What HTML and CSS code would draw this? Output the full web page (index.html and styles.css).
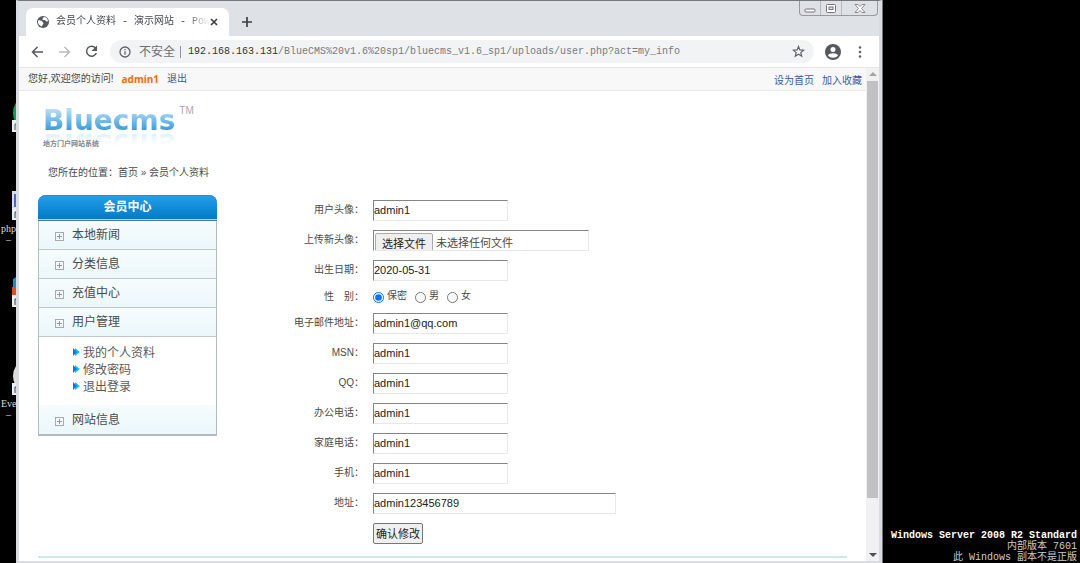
FILE: index.html
```html
<!DOCTYPE html>
<html lang="zh-CN">
<head>
<meta charset="utf-8">
<title>会员个人资料 - 演示网站</title>
<link rel="stylesheet" href="styles.css">
</head>
<body>
<div class="desktop">
  <aside class="shortcuts">
    <div class="shortcut shortcut-a"><svg width="6" height="32" viewBox="0 0 6 32"><ellipse cx="9" cy="12" rx="8" ry="13" fill="#12a04c"/><rect x="0" y="19" width="6" height="12" fill="#e8eef2"/><path d="M3 29v-6h3" stroke="#456" fill="none"/></svg></div>
    <div class="shortcut shortcut-b"><svg width="6" height="32" viewBox="0 0 6 32"><path d="M0 2h6v18H0z" fill="#d6dcec"/><path d="M2 5h4v13H2z" fill="#4b6cb7"/><rect x="0" y="19" width="6" height="12" fill="#e8eef2"/><path d="M3 29v-6h3" stroke="#245" fill="none"/></svg><span>php</span><span>–</span></div>
    <div class="shortcut shortcut-c"><svg width="6" height="32" viewBox="0 0 6 32"><path d="M1 3l5-3v14H1z" fill="#1690c8"/><path d="M0 11h6v8H0z" fill="#e2502a"/><rect x="0" y="19" width="6" height="12" fill="#e8eef2"/><path d="M3 29v-6h3" stroke="#245" fill="none"/></svg></div>
    <div class="shortcut shortcut-d"><svg width="6" height="32" viewBox="0 0 6 32"><ellipse cx="10" cy="12" rx="9" ry="13" fill="#ddd"/><rect x="0" y="19" width="6" height="12" fill="#e8eef2"/><path d="M3 29v-6h3" stroke="#245" fill="none"/></svg><span>Eve</span><span>–</span></div>
  </aside>

  <section class="window">
    <header class="tabstrip">
      <div class="tab">
        <svg class="globe" width="12" height="12" viewBox="0 0 24 24"><circle cx="12" cy="12" r="12" fill="#555a5f"/><path d="M3 8c3 0 4 2 7 2 1 3 3 3 3 5s-3 2-3 6C5 20 2 16 2 12zM13 2c5 0 8 3 9 8-2 2-4 1-5-1s-5 0-6-2 2-2 2-5z" fill="#fff"/></svg>
        <span class="tab-title">会员个人资料 - 演示网站 - Pow</span>
        <button class="icon-button" aria-label="关闭标签"><svg width="8" height="8" viewBox="0 0 8 8"><path d="M1 1l6 6M7 1L1 7" stroke="#3c4043" stroke-width="1.7"/></svg></button>
      </div>
      <button class="icon-button new-tab" aria-label="新标签页"><svg width="12" height="12" viewBox="0 0 12 12"><path d="M6 1v10M1 6h10" stroke="#3c4043" stroke-width="1.7"/></svg></button>
      <div class="window-controls">
        <button aria-label="最小化"><svg width="12" height="9" viewBox="0 0 12 9"><rect x="1" y="5" width="10" height="3" rx="1" fill="#fff" stroke="#70757b"/></svg></button>
        <button aria-label="最大化"><svg width="12" height="9" viewBox="0 0 12 9"><rect x="1.500" y=".5" width="9" height="8" rx="1" fill="#fff" stroke="#70757b"/><rect x="4" y="3" width="4" height="2.500" fill="#dde0e4" stroke="#70757b"/></svg></button>
        <button class="wide" aria-label="关闭"><svg width="12" height="9" viewBox="0 0 12 9"><path d="M1 .5h3l2 2 2-2h3L7.500 4.500l3.500 4H8l-2-2-2 2H1l3.500-4z" fill="#fff" stroke="#85898e"/></svg></button>
      </div>
    </header>

    <nav class="toolbar">
      <button class="icon-button" aria-label="后退"><svg width="13" height="12" viewBox="0 0 13 12"><path d="M12 6H2M6.500 1L1.500 6l5 5" fill="none" stroke="#55595e" stroke-width="1.500"/></svg></button>
      <button class="icon-button" aria-label="前进"><svg width="13" height="12" viewBox="0 0 13 12"><path d="M1 6h10M6.500 1l5 5-5 5" fill="none" stroke="#b9bcbf" stroke-width="1.500"/></svg></button>
      <button class="icon-button" aria-label="刷新"><svg width="13" height="13" viewBox="0 0 13 13"><path d="M10.700 3.300A5 5 0 1 0 11.300 8" fill="none" stroke="#55595e" stroke-width="1.500"/><path d="M12 .5v5.500H6.500z" fill="#55595e"/></svg></button>
      <div class="address">
        <svg width="12" height="12" viewBox="0 0 12 12"><circle cx="6" cy="6" r="5" fill="none" stroke="#5f6368" stroke-width="1.300"/><path d="M6 5.300v3.400M6 3v1.300" stroke="#5f6368" stroke-width="1.300"/></svg>
        <span class="insecure">不安全</span>
        <span class="url"><b>192.168.163.131</b>/BlueCMS%20v1.6%20sp1/bluecms_v1.6_sp1/uploads/user.php?act=my_info</span>
        <button class="icon-button" aria-label="收藏"><svg width="13" height="13" viewBox="0 0 13 13"><path d="M6.500 1.500l1.400 3.400 3.700.3-2.800 2.400.9 3.600-3.200-1.900-3.200 1.900.9-3.600-2.800-2.400 3.700-.3z" fill="none" stroke="#5f6368" stroke-width="1.200"/></svg></button>
      </div>
      <div class="toolbar-end">
        <button class="icon-button" aria-label="用户"><svg width="16" height="16" viewBox="0 0 16 16"><circle cx="8" cy="8" r="8" fill="#55595f"/><circle cx="8" cy="5.500" r="2.500" fill="#fff"/><path d="M3 11.500c1-3 9-3 10 0-2 3-8 3-10 0z" fill="#fff"/></svg></button>
        <button class="icon-button" aria-label="菜单"><svg width="4" height="12" viewBox="0 0 4 12"><g fill="#5f6368"><circle cx="2" cy="1.500" r="1.300"/><circle cx="2" cy="6" r="1.300"/><circle cx="2" cy="10.500" r="1.300"/></g></svg></button>
      </div>
    </nav>

    <div class="viewport">
      <div class="page">
        <div class="topbar">
          <span>您好,欢迎您的访问!</span>
          <strong>admin1</strong>
          <a href="#">退出</a>
          <div class="quick-links"><a href="#">设为首页</a><a href="#">加入收藏</a></div>
        </div>
        <div class="brand">
          <div><div class="wordmark">Bluecms</div><div class="tagline">地方门户网站系统</div></div>
          <span class="tm">TM</span>
        </div>
        <div class="crumbs">您所在的位置：首页 » 会员个人资料</div>

        <div class="columns">
          <nav class="sidebar">
            <h2>会员中心</h2>
            <a class="item" href="#"><i class="plus"></i>本地新闻</a>
            <a class="item" href="#"><i class="plus"></i>分类信息</a>
            <a class="item" href="#"><i class="plus"></i>充值中心</a>
            <a class="item" href="#"><i class="plus"></i>用户管理</a>
            <ul>
              <li><a href="#"><svg width="7" height="8" viewBox="0 0 7 8"><path d="M2 0l5 4-5 4z" fill="#18c0fa"/><path d="M0 0l4 4-4 4z" fill="#0877e8"/></svg>我的个人资料</a></li>
              <li><a href="#"><svg width="7" height="8" viewBox="0 0 7 8"><path d="M2 0l5 4-5 4z" fill="#18c0fa"/><path d="M0 0l4 4-4 4z" fill="#0877e8"/></svg>修改密码</a></li>
              <li><a href="#"><svg width="7" height="8" viewBox="0 0 7 8"><path d="M2 0l5 4-5 4z" fill="#18c0fa"/><path d="M0 0l4 4-4 4z" fill="#0877e8"/></svg>退出登录</a></li>
            </ul>
            <a class="item" href="#"><i class="plus"></i>网站信息</a>
          </nav>

          <form class="profile">
            <div class="row"><label for="avatar">用户头像：</label><input class="field" id="avatar" value="admin1"></div>
            <div class="row"><label for="upload">上传新头像：</label>
              <div class="file"><span class="file-button">选择文件</span><span>未选择任何文件</span><input type="file" id="upload"></div></div>
            <div class="row"><label for="birth">出生日期：</label><input class="field" id="birth" value="2020-05-31"></div>
            <div class="row row-short"><span class="caption">性　别：</span>
              <div class="choices">
                <label><input type="radio" name="sex" checked><span>保密</span></label>
                <label><input type="radio" name="sex"><span>男</span></label>
                <label><input type="radio" name="sex"><span>女</span></label>
              </div></div>
            <div class="row"><label for="email">电子邮件地址：</label><input class="field" id="email" value="admin1@qq.com"></div>
            <div class="row"><label for="msn">MSN：</label><input class="field" id="msn" value="admin1"></div>
            <div class="row"><label for="qq">QQ：</label><input class="field" id="qq" value="admin1"></div>
            <div class="row"><label for="office">办公电话：</label><input class="field" id="office" value="admin1"></div>
            <div class="row"><label for="home">家庭电话：</label><input class="field" id="home" value="admin1"></div>
            <div class="row"><label for="mobile">手机：</label><input class="field" id="mobile" value="admin1"></div>
            <div class="row"><label for="address">地址：</label><input class="field field-long" id="address" value="admin123456789"></div>
            <div class="row"><span></span><button class="submit" type="button">确认修改</button></div>
          </form>
        </div>
        <hr>
      </div>
      <div class="scrollbar"><i class="arrow up"></i><i class="thumb"></i><i class="arrow down"></i></div>
    </div>
  </section>

  <div class="watermark"><b>Windows Server 2008 R2 Standard</b><span>内部版本 7601</span><span>此 Windows 副本不是正版</span></div>
</div>
</body>
</html>
```
FILE: styles.css
```css
* { box-sizing: border-box; }
body { margin: 0; background: #000; font: 10px/12px "Liberation Sans", "Noto Sans CJK SC", sans-serif; color: #4a4a4a; }
button { padding: 0; font: inherit; color: inherit; }
a { color: #3a5ba5; text-decoration: none; }
svg { display: block; flex: none; }

.desktop { display: grid; grid-template-columns: 16px minmax(0, 1fr) 198px; min-height: 100vh; overflow: hidden; }

.shortcuts { position: relative; overflow: hidden; color: #ddd; font-family: "Liberation Serif", serif; }
.shortcut { position: absolute; left: 1px; width: 15px; display: flex; flex-direction: column; font-size: 10px; }
.shortcut svg { margin-left: 11px; margin-bottom: 2px; }
.shortcut span { line-height: 11px; }
.shortcut span + span { padding-left: 5px; }
.shortcut-a { top: 101px; }
.shortcut-b { top: 189px; }
.shortcut-c { top: 276px; }
.shortcut-d { top: 364px; }

.window { display: flex; flex-direction: column; border: solid #d9dce2; border-width: 0 3px 2px; border-top: 1px solid #77787c; box-shadow: 1px 0 #777; background: #dee1e6; }
.icon-button { display: flex; align-items: center; justify-content: center; border: 0; background: none; }

.tabstrip { display: flex; height: 35px; padding-left: 7px; }
.tab { display: flex; align-items: center; width: 203px; margin-top: 7px; padding: 0 11px; border-radius: 7px 7px 0 0; background: #fff; }
.tab-title { flex: 1; margin-left: 7px; white-space: nowrap; font: 10px/14px "Liberation Mono", "Noto Sans CJK SC", monospace; color: #45494d; -webkit-mask-image: linear-gradient(to right, #000 84%, transparent); }
.new-tab { margin: 15px 0 0 12px; height: 12px; }
.window-controls { display: flex; height: 15px; margin-left: auto; margin-right: 1px; border: 1px solid #96999e; border-top: 0; border-radius: 0 0 4px 4px; }
.window-controls button { display: flex; align-items: center; justify-content: center; width: 21px; border: 0; border-right: 1px solid #b6b9be; background: none; }
.window-controls .wide { width: 35px; border-right: 0; }

.toolbar { display: flex; align-items: center; gap: 14px; height: 31px; padding: 0 17px 0 12px; background: #fff; }
.toolbar-end { display: flex; align-items: center; gap: 17px; margin-left: -3px; }
.address { display: flex; align-items: center; flex: 1; height: 23px; margin-left: -2px; padding: 0 9px; border-radius: 12px; background: #f1f3f4; }
.insecure { margin-left: 8px; padding-right: 5px; border-right: 1px solid #909499; font-size: 12px; color: #6a6e73; }
.url { flex: 1; margin-left: 7px; white-space: nowrap; font: 10px/14px "Liberation Mono", monospace; color: #777b80; }
.url b { font-weight: 400; color: #333; }

.viewport { display: flex; flex: 1; border-top: 1px solid #e4e5e6; background: #fff; }
.page { flex: 1; min-width: 0; }
.scrollbar { display: flex; flex-direction: column; align-items: center; width: 13px; padding: 4px 1px; background: #f1f1f1; }
.arrow { border: 4px solid transparent; }
.up { border-top: 0; border-bottom-color: #a3a3a3; }
.down { margin-top: auto; border-bottom: 0; border-top-color: #505050; }
.thumb { width: 11px; height: 86%; margin-top: 5px; background: #c1c1c1; }

.topbar { display: flex; align-items: center; gap: 8px; height: 23px; padding: 0 4px 0 9px; border-bottom: 1px solid #e7e7e7; background: #f8f8f8; }
.topbar strong { font-family: "Open Sans", sans-serif; color: #ff6a00; }
.quick-links { display: flex; gap: 8px; margin-left: auto; padding-top: 4px; }

.brand { display: flex; gap: 4px; padding: 14px 0 0 24px; }
.wordmark { height: 32px; font: bold 28px/32px "DejaVu Sans", sans-serif; color: transparent; background: linear-gradient(#b4dcf5 15%, #2f97da 85%); -webkit-background-clip: text; background-clip: text; -webkit-box-reflect: below -10px linear-gradient(transparent 40%, rgba(0, 0, 0, .25)); }
.tagline { font: bold 7px/12px "Noto Sans CJK SC", sans-serif; color: #858585; }
.tm { color: #aaa; }
.crumbs { padding: 18px 0 16px 29px; }

.columns { display: flex; padding-left: 19px; }
.sidebar { align-self: flex-start; width: 179px; border: solid #b4bbbd; border-width: 0 1px 2px; border-radius: 8px 8px 0 0; }
.sidebar h2 { height: 26px; margin: 0 -1px; border-bottom: 1px solid #44799b; border-radius: 8px 8px 0 0; box-shadow: inset 0 1px #4a87ad, inset 0 -1px #a9d8f2; background: linear-gradient(#26a0ec, #0078c4); font-size: 12px; line-height: 25px; text-align: center; color: #fff; }
.item { display: flex; align-items: center; height: 29px; padding-left: 16px; border-bottom: 1px solid #c2c8ca; background: linear-gradient(#f6fcfe, #ebf7fb); font-size: 12px; color: #4a4a4a; }
.item:last-child { border-bottom: 0; }
.plus { width: 9px; height: 9px; margin: 3px 8px 0 0; border: 1px solid #aaa; background: linear-gradient(#999, #999) center / 5px 1px no-repeat, linear-gradient(#999, #999) center / 1px 5px no-repeat; }
.sidebar ul { margin: 0; padding: 8px 0 9px 34px; list-style: none; }
.sidebar li a { display: flex; align-items: center; gap: 3px; font-size: 12px; line-height: 17px; color: #5a5a5a; }
.sidebar li svg { margin-bottom: 3px; }

.profile { flex: 1; padding-top: 5px; }
.row { display: grid; grid-template-columns: 147px 1fr; column-gap: 9px; height: 30px; align-items: start; }
.row > label, .caption { line-height: 20px; text-align: right; }
.row-short { height: 23px; }
.row-short .caption { line-height: 14px; }
.field { width: 135px; height: 21px; padding: 0 0 1px; border: 1px solid; border-color: #858585 #e8e8e8 #e8e8e8 #858585; font: 11px/18px "Liberation Sans", sans-serif; color: #222; }
.field-long { width: 243px; }
.file { position: relative; display: flex; gap: 3px; width: 216px; height: 21px; overflow: hidden; padding: 2px 0 0 1px; border: 1px solid; border-color: #858585 #e8e8e8 #e8e8e8 #858585; font-size: 11px; line-height: 20px; }
.file-button { width: 58px; height: 22px; border: 1px solid #aaa; border-radius: 2px; background: #efefef; text-align: center; color: #222; }
.file input { position: absolute; inset: 0; opacity: 0; }
.choices { display: flex; gap: 8px; }
.choices label { display: flex; gap: 3px; line-height: 12px; }
.choices input { width: 11px; height: 11px; margin: 2px 0 0; }
.submit { justify-self: start; height: 21px; padding: 0 2px; border: 1px solid #777; border-radius: 2px; background: #efefef; font-size: 11px; line-height: 18px; color: #222; }
hr { height: 2px; margin: 3px 19px; border: 0; background: #cde6f3; }

.watermark { display: flex; flex-direction: column; justify-content: flex-end; align-items: flex-end; padding-right: 3px; white-space: nowrap; font: 10px/11px "Liberation Mono", "Noto Sans CJK SC", monospace; color: #ccc; }
.watermark b { color: #fff; }
```
